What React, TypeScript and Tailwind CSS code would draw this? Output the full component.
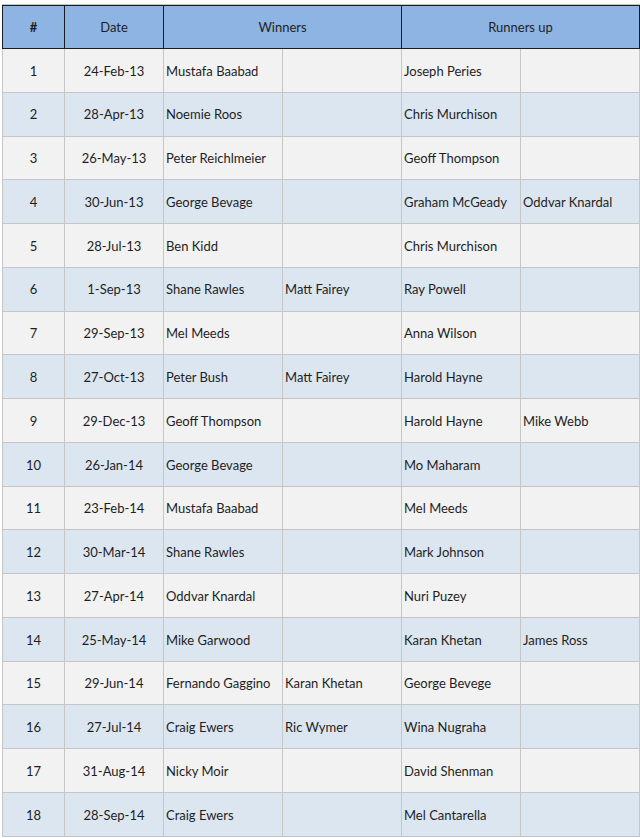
import React from "react";

interface Match {
  id: number;
  date: string;
  winners: [string, string];
  runnersUp: [string, string];
}

const matches: Match[] = [
  { id: 1, date: "24-Feb-13", winners: ["Mustafa Baabad", ""], runnersUp: ["Joseph Peries", ""] },
  { id: 2, date: "28-Apr-13", winners: ["Noemie Roos", ""], runnersUp: ["Chris Murchison", ""] },
  { id: 3, date: "26-May-13", winners: ["Peter Reichlmeier", ""], runnersUp: ["Geoff Thompson", ""] },
  { id: 4, date: "30-Jun-13", winners: ["George Bevage", ""], runnersUp: ["Graham McGeady", "Oddvar Knardal"] },
  { id: 5, date: "28-Jul-13", winners: ["Ben Kidd", ""], runnersUp: ["Chris Murchison", ""] },
  { id: 6, date: "1-Sep-13", winners: ["Shane Rawles", "Matt Fairey"], runnersUp: ["Ray Powell", ""] },
  { id: 7, date: "29-Sep-13", winners: ["Mel Meeds", ""], runnersUp: ["Anna Wilson", ""] },
  { id: 8, date: "27-Oct-13", winners: ["Peter Bush", "Matt Fairey"], runnersUp: ["Harold Hayne", ""] },
  { id: 9, date: "29-Dec-13", winners: ["Geoff Thompson", ""], runnersUp: ["Harold Hayne", "Mike Webb"] },
  { id: 10, date: "26-Jan-14", winners: ["George Bevage", ""], runnersUp: ["Mo Maharam", ""] },
  { id: 11, date: "23-Feb-14", winners: ["Mustafa Baabad", ""], runnersUp: ["Mel Meeds", ""] },
  { id: 12, date: "30-Mar-14", winners: ["Shane Rawles", ""], runnersUp: ["Mark Johnson", ""] },
  { id: 13, date: "27-Apr-14", winners: ["Oddvar Knardal", ""], runnersUp: ["Nuri Puzey", ""] },
  { id: 14, date: "25-May-14", winners: ["Mike Garwood", ""], runnersUp: ["Karan Khetan", "James Ross"] },
  { id: 15, date: "29-Jun-14", winners: ["Fernando Gaggino", "Karan Khetan"], runnersUp: ["George Bevege", ""] },
  { id: 16, date: "27-Jul-14", winners: ["Craig Ewers", "Ric Wymer"], runnersUp: ["Wina Nugraha", ""] },
  { id: 17, date: "31-Aug-14", winners: ["Nicky Moir", ""], runnersUp: ["David Shenman", ""] },
  { id: 18, date: "28-Sep-14", winners: ["Craig Ewers", ""], runnersUp: ["Mel Cantarella", ""] },
];

const cols = "grid grid-cols-[62px_99px_119px_119px_119px_119px]";

export default function App() {
  return (
    <main
      className="h-[838px] w-[640px] overflow-hidden bg-white pt-[4px] pl-[2px] text-[13px] text-[#1e1e1e]"
      style={{ fontFamily: "Lato, 'Open Sans', sans-serif" }}
    >
      <div className="w-[638px] border-t border-[#c6c6c6]">
        <div className="grid h-[44px] grid-cols-[62px_99px_238px_238px] border-y border-l border-[#1c1c1c] bg-[#8db4e2] text-[#1f1f1f]">
          <div className="flex items-center justify-center border-r border-[#1c1c1c] pt-[2px] font-bold">#</div>
          <div className="flex items-center justify-center border-r border-[#1c1c1c] pt-[2px]">Date</div>
          <div className="flex items-center justify-center border-r border-[#1c1c1c] pt-[2px]">Winners</div>
          <div className="flex items-center justify-center border-r border-[#1c1c1c] pt-[2px]">Runners up</div>
        </div>
        <div className="border-l border-[#c6c6c6]">
          {matches.map((m) => (
            <div
              key={m.id}
              className={`${cols} h-[43.78px] border-b border-[#c6c6c6] ${
                m.id % 2 === 1 ? "bg-[#f2f2f2]" : "bg-[#dce6f1]"
              }`}
            >
              <div className="flex items-center justify-center border-r border-[#c6c6c6] pt-[2px]">{m.id}</div>
              <div className="flex items-center justify-center border-r border-[#c6c6c6] pt-[2px]">{m.date}</div>
              {[...m.winners, ...m.runnersUp].map((name, i) => (
                <div key={i} className="flex items-center truncate border-r border-[#c6c6c6] pt-[2px] pl-[2px]">
                  {name}
                </div>
              ))}
            </div>
          ))}
        </div>
      </div>
    </main>
  );
}
